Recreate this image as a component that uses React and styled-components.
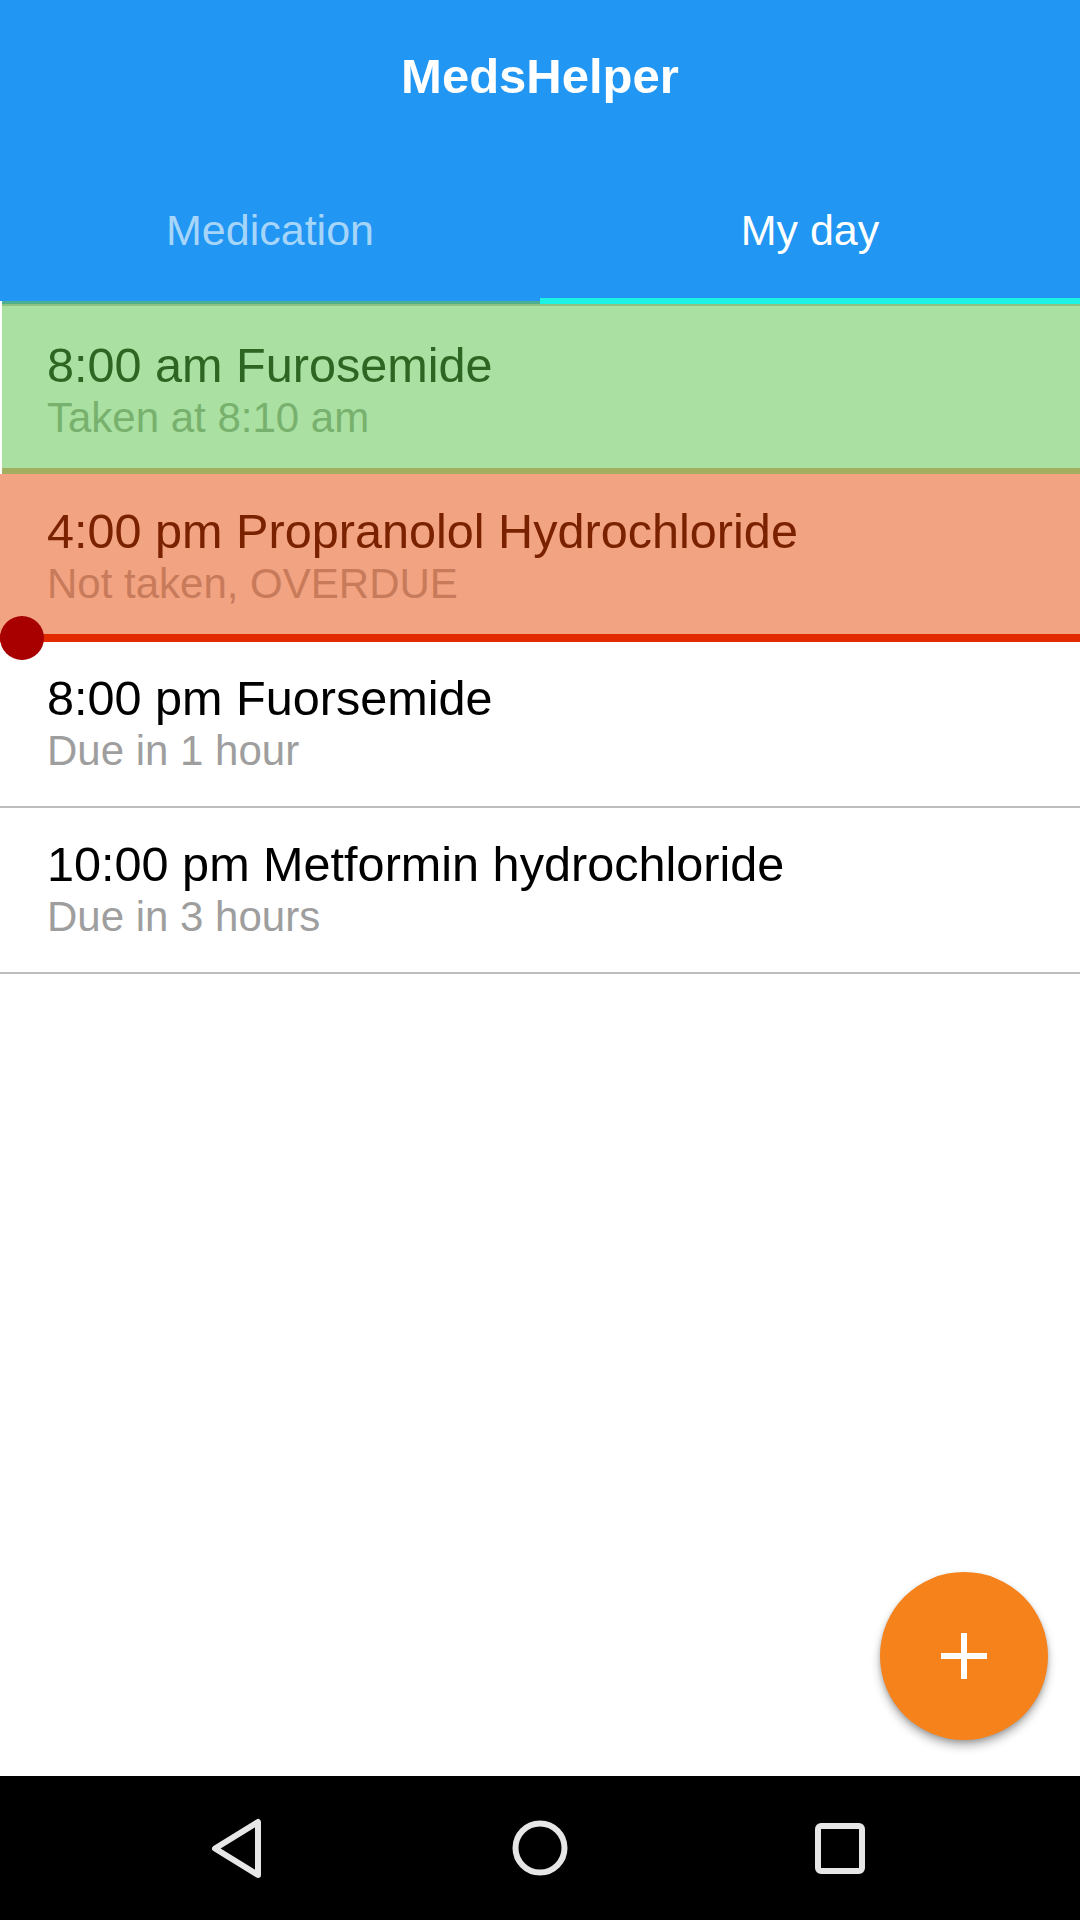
import React from "react";
import styled, { createGlobalStyle, css } from "styled-components";

const GlobalStyle = createGlobalStyle`
  html, body { margin: 0; padding: 0; background: #ffffff; }
  body { font-family: "Liberation Sans", Arial, Helvetica, sans-serif; }
  * { box-sizing: border-box; }
`;

const Screen = styled.div`
  position: relative;
  width: 1080px;
  height: 1920px;
  display: flex;
  flex-direction: column;
  background: #ffffff;
  overflow: hidden;
`;

const AppBar = styled.header`
  position: relative;
  z-index: 3;
  height: 301px;
  background: #2196f3;
  display: flex;
  flex-direction: column;
`;

const TitleRow = styled.div`
  height: 152px;
  display: flex;
  align-items: center;
  justify-content: center;
`;

const Title = styled.h1`
  margin: 0;
  font-size: 49px;
  line-height: 56px;
  font-weight: 700;
  color: #ffffff;
`;

const Tabs = styled.nav`
  flex: 1;
  display: grid;
  grid-template-columns: 1fr 1fr;
`;

const Tab = styled.div`
  position: relative;
  display: flex;
  justify-content: center;
  padding-top: 54px;
  font-size: 43px;
  line-height: 48px;
  color: ${(p) => (p.$active ? "#ffffff" : "#a6d5fa")};
`;

const Indicator = styled.span`
  position: absolute;
  left: 0;
  right: 0;
  bottom: -3px;
  height: 6px;
  background: #1ef2e2;
`;

const List = styled.section`
  display: flex;
  flex-direction: column;
`;

const variants = {
  taken: css`
    margin-left: 2px;
    padding: 33px 0 26px 45px;
    background: #aae0a1;
    border-top: 3px solid #4dae90;
    border-bottom: 6px solid #a2af60;
    box-shadow: inset 0 2px 0 #8fc083;
  `,
  overdue: css`
    padding: 29px 0 26px 47px;
    background: #f2a381;
    border-bottom: 8px solid #e22a00;
  `,
  pending: css`
    padding: 28px 0 31px 47px;
    background: #ffffff;
    border-bottom: 2px solid #bdbdbd;
  `,
};

const titleColors = { taken: "#2d6522", overdue: "#7a2100", pending: "#000000" };
const subColors = { taken: "#78b16e", overdue: "#c87b5b", pending: "#9e9e9e" };

const Row = styled.div`
  position: relative;
  display: flex;
  flex-direction: column;
  ${(p) => variants[p.$variant]}
`;

const RowTitle = styled.div`
  font-size: 48.6px;
  line-height: 56px;
  color: ${(p) => titleColors[p.$variant]};
`;

const RowSub = styled.div`
  margin-top: 1px;
  font-size: 42px;
  line-height: 48px;
  color: ${(p) => subColors[p.$variant]};
`;

const NowDot = styled.span`
  position: absolute;
  z-index: 2;
  left: 0;
  bottom: -26px;
  width: 44px;
  height: 44px;
  border-radius: 50%;
  background: #a80000;
`;

const Spacer = styled.div`
  flex: 1;
`;

const Fab = styled.button`
  position: absolute;
  right: 32px;
  bottom: 180px;
  width: 168px;
  height: 168px;
  border: none;
  border-radius: 50%;
  background: #f5821a;
  box-shadow: 0 6px 10px rgba(0, 0, 0, 0.28), 0 2px 4px rgba(0, 0, 0, 0.16);
  display: flex;
  align-items: center;
  justify-content: center;
  padding: 0;
`;

const NavBar = styled.footer`
  height: 144px;
  background: #000000;
  display: flex;
  justify-content: center;
  align-items: center;
`;

const NavSlot = styled.div`
  width: 300px;
  display: flex;
  justify-content: center;
  align-items: center;
`;

const items = [
  { v: "taken", t: "8:00 am Furosemide", s: "Taken at 8:10 am" },
  { v: "overdue", t: "4:00 pm Propranolol Hydrochloride", s: "Not taken, OVERDUE", now: true },
  { v: "pending", t: "8:00 pm Fuorsemide", s: "Due in 1 hour" },
  { v: "pending", t: "10:00 pm Metformin hydrochloride", s: "Due in 3 hours" },
];

export default function App() {
  return (
    <>
      <GlobalStyle />
      <Screen>
        <AppBar>
          <TitleRow>
            <Title>MedsHelper</Title>
          </TitleRow>
          <Tabs>
            <Tab>Medication</Tab>
            <Tab $active>
              My day
              <Indicator />
            </Tab>
          </Tabs>
        </AppBar>
        <List>
          {items.map((it, i) => (
            <Row key={i} $variant={it.v}>
              <RowTitle $variant={it.v}>{it.t}</RowTitle>
              <RowSub $variant={it.v}>{it.s}</RowSub>
              {it.now && <NowDot />}
            </Row>
          ))}
        </List>
        <Spacer />
        <NavBar>
          <NavSlot>
            <svg width="60" height="66" viewBox="0 0 60 66">
              <polygon
                points="48,7 48,60 5,33.5"
                fill="none"
                stroke="#e6e6e6"
                strokeWidth="6"
                strokeLinejoin="round"
              />
            </svg>
          </NavSlot>
          <NavSlot>
            <svg width="56" height="56" viewBox="0 0 56 56">
              <circle cx="28" cy="28" r="24.5" fill="none" stroke="#e6e6e6" strokeWidth="6" />
            </svg>
          </NavSlot>
          <NavSlot>
            <svg width="50" height="51" viewBox="0 0 50 51">
              <rect x="3" y="3" width="44" height="45" rx="3" fill="none" stroke="#e6e6e6" strokeWidth="6" />
            </svg>
          </NavSlot>
        </NavBar>
        <Fab aria-label="Add">
          <svg width="46" height="46" viewBox="0 0 46 46">
            <path d="M23 0 V46 M0 23 H46" stroke="#ffffff" strokeWidth="6" />
          </svg>
        </Fab>
      </Screen>
    </>
  );
}
